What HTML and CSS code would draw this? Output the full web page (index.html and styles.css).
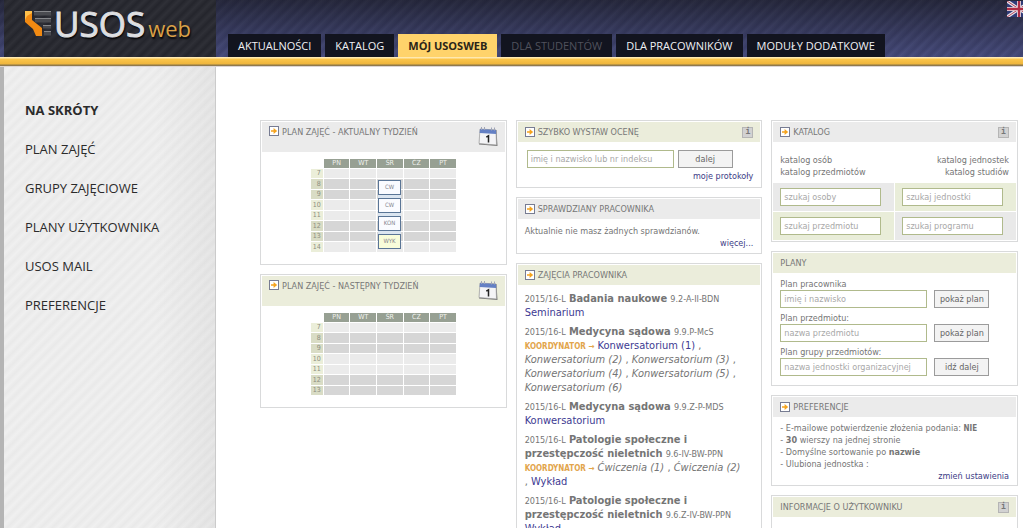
FILE: index.html
```html
<!DOCTYPE html>
<html lang="pl">
<head>
<meta charset="utf-8">
<title>USOSweb</title>
<link rel="stylesheet" href="styles.css">
</head>
<body>
<svg class="defs" aria-hidden="true">
  <symbol id="arrow" viewBox="0 0 10 10">
    <rect x=".5" y=".5" width="9" height="9" fill="#fff" stroke="#777c92"/>
    <path d="M2 4.2h2.600V2L8.200 5 4.600 8V5.800H2z" fill="#f5a31c"/>
  </symbol>
  <symbol id="calendar" viewBox="0 0 20 21">
    <path d="M3 3 18.500 4 19.500 20 1 18.500z" fill="#777"/>
    <path d="M2 3 18 4 18.500 19 1 17.500z" fill="#f4f4f6" stroke="#999" stroke-width=".7"/>
    <path d="M2 3 18 4 18.200 8 1.600 7z" fill="#6480c4"/>
    <path d="M3.500 1v3M6.500 1v3M13.500 1.500v3M16.500 1.500v3" stroke="#a0a5b8"/>
    <path d="M8.300 11.200l2.200-1.400V16.500" fill="none" stroke="#222" stroke-width="1.500"/>
  </symbol>
</svg>
<header class="top">
  <a class="logo" href="#">
    <svg class="mark" viewBox="0 0 27 26" aria-hidden="true">
      <path d="M0 0h7v9l10 8v8h-6L8 18 0 11z" fill="#f28a12"/>
      <path d="M0 0h7v2L2 5 0 9z" fill="#ffc04a"/>
      <path d="M9 0h17v4.500H9zM10 7h16v4.500H10zM18 14h8v3.500h-8zM19 20h7v4.500h-7z" fill="#4a4b50"/>
      <path d="M9 .5h17M10 7.500h16M18 14.500h8M19 20.500h7" stroke="#85868a"/>
    </svg>
    <span class="usos">USOS</span><span class="web">web</span>
  </a>
  <nav class="tabs">
    <a href="#">AKTUALNOŚCI</a>
    <a href="#">KATALOG</a>
    <a class="active" href="#">MÓJ USOSWEB</a>
    <a class="off" href="#">DLA STUDENTÓW</a>
    <a href="#">DLA PRACOWNIKÓW</a>
    <a href="#">MODUŁY DODATKOWE</a>
  </nav>
  <a class="flag" href="#" aria-label="English">
    <svg viewBox="0 0 24 16">
      <path fill="#303c78" d="M0 0h24v16H0z"/>
      <path d="M0 0l24 16M24 0L0 16" stroke="#e6e4ea" stroke-width="3.200"/>
      <path d="M0 0l24 16M24 0L0 16" stroke="#b5445a" stroke-width="1"/>
      <path d="M12 0v16M0 8h24" stroke="#e6e4ea" stroke-width="4"/>
      <path d="M12 0v16M0 8h24" stroke="#b02c44" stroke-width="2.400"/>
    </svg>
  </a>
</header>
<div class="bar"></div>
<div class="page">
  <nav class="side">
    <strong>NA SKRÓTY</strong>
    <a href="#">PLAN ZAJĘĆ</a>
    <a href="#">GRUPY ZAJĘCIOWE</a>
    <a href="#">PLANY UŻYTKOWNIKA</a>
    <a href="#">USOS MAIL</a>
    <a href="#">PREFERENCJE</a>
  </nav>
  <main class="cols">
    <div class="col">
      <section class="panel">
        <h2 class="tall"><svg class="arrow"><use href="#arrow"/></svg>PLAN ZAJĘĆ - AKTUALNY TYDZIEŃ<svg class="cal"><use href="#calendar"/></svg></h2>
        <div class="plan">
          <table>
            <thead><tr><td></td><th>PN</th><th>WT</th><th>ŚR</th><th>CZ</th><th>PT</th></tr></thead>
            <tbody>
              <tr><th>7</th><td></td><td></td><td></td><td></td><td></td></tr>
              <tr><th>8</th><td></td><td></td><td class="day"><div class="events"><a href="#">CW</a><a href="#">CW</a><a href="#">KON</a><a class="lecture" href="#">WYK</a></div></td><td></td><td></td></tr>
              <tr><th>9</th><td></td><td></td><td></td><td></td><td></td></tr>
              <tr><th>10</th><td></td><td></td><td></td><td></td><td></td></tr>
              <tr><th>11</th><td></td><td></td><td></td><td></td><td></td></tr>
              <tr><th>12</th><td></td><td></td><td></td><td></td><td></td></tr>
              <tr><th>13</th><td></td><td></td><td></td><td></td><td></td></tr>
              <tr><th>14</th><td></td><td></td><td></td><td></td><td></td></tr>
            </tbody>
          </table>
        </div>
      </section>
      <section class="panel">
        <h2 class="tall olive"><svg class="arrow"><use href="#arrow"/></svg>PLAN ZAJĘĆ - NASTĘPNY TYDZIEŃ<svg class="cal"><use href="#calendar"/></svg></h2>
        <div class="plan">
          <table>
            <thead><tr><td></td><th>PN</th><th>WT</th><th>ŚR</th><th>CZ</th><th>PT</th></tr></thead>
            <tbody>
              <tr><th>7</th><td></td><td></td><td></td><td></td><td></td></tr>
              <tr><th>8</th><td></td><td></td><td></td><td></td><td></td></tr>
              <tr><th>9</th><td></td><td></td><td></td><td></td><td></td></tr>
              <tr><th>10</th><td></td><td></td><td></td><td></td><td></td></tr>
              <tr><th>11</th><td></td><td></td><td></td><td></td><td></td></tr>
              <tr><th>12</th><td></td><td></td><td></td><td></td><td></td></tr>
              <tr><th>13</th><td></td><td></td><td></td><td></td><td></td></tr>
            </tbody>
          </table>
        </div>
      </section>
    </div>
    <div class="col">
      <section class="panel">
        <h2 class="olive"><svg class="arrow"><use href="#arrow"/></svg>SZYBKO WYSTAW OCENĘ<button class="info" type="button">i</button></h2>
        <form class="grade">
          <div class="line"><input type="text" aria-label="Student" placeholder="imię i nazwisko lub nr indeksu"><button type="button">dalej</button></div>
          <a class="more" href="#">moje protokoły</a>
        </form>
      </section>
      <section class="panel">
        <h2><svg class="arrow"><use href="#arrow"/></svg>SPRAWDZIANY PRACOWNIKA</h2>
        <div class="text">
          <p>Aktualnie nie masz żadnych sprawdzianów.</p>
          <a class="more" href="#">więcej...</a>
        </div>
      </section>
      <section class="panel">
        <h2 class="olive"><svg class="arrow"><use href="#arrow"/></svg>ZAJĘCIA PRACOWNIKA</h2>
        <div class="classes">
          <p><small>2015/16-L</small> <b>Badania naukowe</b> <small>9.2-A-II-BDN</small><br><a href="#">Seminarium</a></p>
          <p><small>2015/16-L</small> <b>Medycyna sądowa</b> <small>9.9.P-McS</small><br><strong>KOORDYNATOR →</strong> <a href="#">Konwersatorium (1)</a> ,<br><i>Konwersatorium (2)</i> , <i>Konwersatorium (3)</i> ,<br><i>Konwersatorium (4)</i> , <i>Konwersatorium (5)</i> ,<br><i>Konwersatorium (6)</i></p>
          <p><small>2015/16-L</small> <b>Medycyna sądowa</b> <small>9.9.Z-P-MDS</small><br><a href="#">Konwersatorium</a></p>
          <p><small>2015/16-L</small> <b>Patologie społeczne i<br>przestępczość nieletnich</b> <small>9.6-IV-BW-PPN</small><br><strong>KOORDYNATOR →</strong> <i>Ćwiczenia (1)</i> , <i>Ćwiczenia (2)</i><br>, <a href="#">Wykład</a></p>
          <p><small>2015/16-L</small> <b>Patologie społeczne i<br>przestępczość nieletnich</b> <small>9.6.Z-IV-BW-PPN</small><br><a href="#">Wykład</a></p>
        </div>
      </section>
    </div>
    <div class="col">
      <section class="panel">
        <h2><svg class="arrow"><use href="#arrow"/></svg>KATALOG<button class="info" type="button">i</button></h2>
        <div class="links">
          <div><a href="#">katalog osób</a><a href="#">katalog przedmiotów</a></div>
          <div class="right"><a href="#">katalog jednostek</a><a href="#">katalog studiów</a></div>
        </div>
        <form class="search">
          <div><input type="text" aria-label="Osoba" placeholder="szukaj osoby"></div>
          <div><input type="text" aria-label="Jednostka" placeholder="szukaj jednostki"></div>
          <div><input type="text" aria-label="Przedmiot" placeholder="szukaj przedmiotu"></div>
          <div><input type="text" aria-label="Program" placeholder="szukaj programu"></div>
        </form>
      </section>
      <section class="panel">
        <h2 class="olive">PLANY</h2>
        <form class="plans">
          <div><label for="p1">Plan pracownika</label><div class="line"><input id="p1" type="text" placeholder="imię i nazwisko"><button type="button">pokaż plan</button></div></div>
          <div><label for="p2">Plan przedmiotu:</label><div class="line"><input id="p2" type="text" placeholder="nazwa przedmiotu"><button type="button">pokaż plan</button></div></div>
          <div><label for="p3">Plan grupy przedmiotów:</label><div class="line"><input id="p3" type="text" placeholder="nazwa jednostki organizacyjnej"><button type="button">idź dalej</button></div></div>
        </form>
      </section>
      <section class="panel">
        <h2><svg class="arrow"><use href="#arrow"/></svg>PREFERENCJE</h2>
        <div class="text prefs">
          <p>- E-mailowe potwierdzenie złożenia podania: <b class="flagval">NIE</b></p>
          <p>- <b>30</b> wierszy na jednej stronie</p>
          <p>- Domyślne sortowanie po <b>nazwie</b></p>
          <p>- Ulubiona jednostka :</p>
          <a class="more" href="#">zmień ustawienia</a>
        </div>
      </section>
      <section class="panel">
        <h2 class="olive">INFORMACJE O UŻYTKOWNIKU<button class="info" type="button">i</button></h2>
        <div class="text"><p>&nbsp;</p></div>
      </section>
    </div>
  </main>
</div>
</body>
</html>
```
FILE: styles.css
```css
* { box-sizing: border-box; }
body {
  margin: 0;
  height: 100vh;
  overflow: hidden;
  display: flex;
  flex-direction: column;
  background: #fff;
  color: #757575;
  font: 9px/12px "DejaVu Sans Condensed", "DejaVu Sans", sans-serif;
}
a { text-decoration: none; color: inherit; }
p, h2 { margin: 0; }
.defs { display: none; }

.top {
  flex: none;
  position: relative;
  height: 57px;
  padding-left: 4px;
  display: flex;
  align-items: stretch;
  background:
    repeating-linear-gradient(135deg, rgba(20, 20, 40, .12) 0 1px, rgba(255, 255, 255, .02) 4px, rgba(20, 20, 40, .12) 8px),
    linear-gradient(#25273b, #464b7c);
}
.bar {
  flex: none;
  height: 10px;
  background: linear-gradient(#ffe9b0 0 1px, #fcc64b 2px, #eeb53d 7px, #8f7a4c 8px 9px, #dcd4d4 9px);
}
.logo {
  width: 212px;
  padding: 0 0 0 21px;
  display: flex;
  align-items: flex-start;
  background: repeating-linear-gradient(135deg, #24252c, #2f3037 4px, #24252c 8px);
}
.mark { width: 27px; height: 26px; margin-top: 11px; }
.usos, .web { font-family: "Open Sans", "Noto Sans", sans-serif; line-height: 48px; text-shadow: 1px 2px 2px #000; }
.usos { margin-left: 2px; font-size: 35px; color: #dedfe1; -webkit-text-stroke: 1px #dedfe1; }
.web { margin-left: 3px; padding-top: 4px; font-size: 22px; color: #d9a047; }
.tabs { display: flex; align-items: flex-end; gap: 4px; padding-left: 12px; }
.tabs a {
  padding: 0 10px;
  background: #12141f;
  color: #f0f0f4;
  font: 11px/23px "Open Sans", "Noto Sans", sans-serif;
  white-space: nowrap;
}
.tabs .active { background: #ffd36b; color: #2a2418; font-weight: 700; }
.tabs .off { color: #50515c; }
.flag { position: absolute; top: 1px; right: 0; width: 16px; height: 16px; overflow: hidden; }
.flag svg { display: block; width: 24px; height: 16px; }

.page { flex: 1; display: flex; min-height: 0; }
.side {
  flex: none;
  width: 216px;
  padding: 24px 0 0 21px;
  display: flex;
  flex-direction: column;
  border-left: 4px solid #b4b4b4;
  border-right: 1px solid #cbcbcb;
  background:
    linear-gradient(90deg, transparent 150px, rgba(0, 0, 0, .04)),
    repeating-linear-gradient(135deg, #e9e9e9, #f0f0f0 4px, #e9e9e9 8px);
  color: #2b2b2b;
  font: 13px/39px "Open Sans", "Noto Sans", sans-serif;
}
.cols {
  flex: 1;
  min-width: 0;
  padding: 53px 5px 0 44px;
  display: grid;
  grid-template-columns: repeat(3, minmax(0, 1fr));
  gap: 9px;
  align-items: start;
}
.col { display: flex; flex-direction: column; gap: 9px; }
.panel { border: 1px solid #d9dadb; padding: 1px; background: #fff; }
h2 {
  display: flex;
  align-items: center;
  min-height: 20px;
  padding: 0 7px;
  background: #ebebeb;
  color: #777;
  font-size: 9px;
  line-height: 20px;
  font-weight: 400;
}
h2.olive { background: #ebeddb; }
h2.tall { height: 30px; align-items: flex-start; }
.arrow { width: 10px; height: 10px; margin-right: 3px; flex: none; }
.tall .arrow { margin-top: 4px; }
.cal { width: 20px; height: 21px; margin: 4px 0 0 auto; }
.info {
  margin-left: auto;
  width: 11px;
  height: 11px;
  padding: 0;
  border: 1px solid #b5b5b5;
  background: #d2d2d2;
  color: #777;
  font: bold 8px/8px "DejaVu Sans Mono", monospace;
}

.plan { display: flex; justify-content: center; padding: 6px 0 10px; }
.plan table { width: 147px; table-layout: fixed; border-spacing: 1px; }
.plan th, .plan td { padding: 0; height: 9px; font-size: 7px; line-height: 9px; font-weight: 400; }
.plan tr:nth-child(even) > * { height: 10px; }
.plan thead th { background: #97a093; color: #f0f2ee; }
.plan thead td { width: 12px; }
.plan tbody td { background: #ebebeb; }
.plan tbody th { background: #ebeed9; color: #8c8e80; text-align: right; padding-right: 2px; }
.plan tbody tr:nth-child(4n+2) td, .plan tbody tr:nth-child(4n+3) td { background: #d6d6d6; }
.plan tbody tr:nth-child(4n+2) th, .plan tbody tr:nth-child(4n+3) th { background: #d9dcc5; }
.day { position: relative; }
.events { position: absolute; left: 1px; top: 1px; width: 23px; display: flex; flex-direction: column; gap: 3px; background: #dbe5f0; }
.events a { height: 15px; border: 1px solid #5a7596; background: #fafbff; color: #85858d; font-size: 6px; line-height: 11px; text-align: center; }
.events .lecture { background: #f8fcda; }

input {
  min-width: 0;
  height: 18px;
  padding: 0 3px;
  border: 1px solid #b0ba8c;
  border-radius: 0;
  background: #fff;
  color: #666;
  font: inherit;
}
input::placeholder { color: #a8a8a8; opacity: 1; }
.line { display: flex; align-items: center; }
.line input { width: 147px; }
.line button {
  width: 55px;
  height: 18px;
  padding: 0;
  border: 1px solid #9b9b9b;
  background: #f3f3f3;
  color: #666;
  font: inherit;
}
.grade { padding: 8px 7px 4px 9px; }
.grade .line { gap: 4px; }
.grade .more { margin-top: 2px; }
.more { display: block; text-align: right; color: #3c3c86; }
.text { padding: 6px 7px 3px; }
.text.prefs { padding: 5px 7px 2px; }
.classes { padding: 7px; display: flex; flex-direction: column; gap: 5px; font-size: 11px; line-height: 14px; }
.classes p { white-space: nowrap; }
.classes small { font-size: 9px; line-height: 9px; }
.classes a { color: #3d3a92; }
.classes strong { color: #e2a54c; font-size: 8px; line-height: 9px; }
.flagval { font-size: 8px; line-height: 9px; }
.links { display: flex; justify-content: space-between; padding: 12px 7px 5px; }
.links a { display: block; }
.right { text-align: right; }
.search { display: grid; grid-template-columns: repeat(2, minmax(0, 1fr)); gap: 1px; }
.search div { display: flex; padding: 5px 13px 5px 7px; background: #e9e9e9; }
.search div:nth-child(2), .search div:nth-child(3) { background: #e9edd9; }
.search input { flex: 1; }
.plans { padding: 6px 7px 8px; display: flex; flex-direction: column; gap: 5px; line-height: 11px; }
.plans label { display: block; }
.plans .line { gap: 7px; }
```
